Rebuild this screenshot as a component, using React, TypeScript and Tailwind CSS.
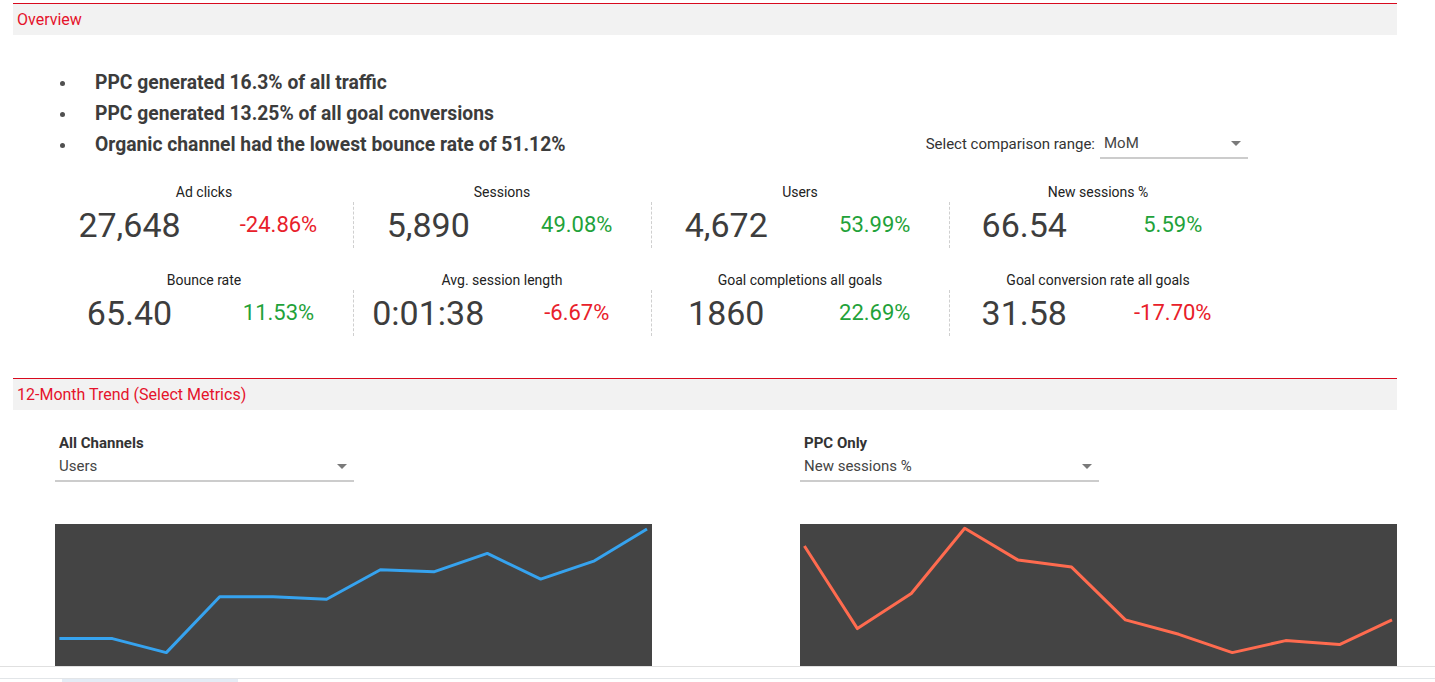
import React from 'react'

const font = { fontFamily: 'Roboto, "Liberation Sans", sans-serif' }

type Metric = { label: string; value: string; delta: string; up: boolean }

const metrics: Metric[][] = [
  [
    { label: 'Ad clicks', value: '27,648', delta: '-24.86%', up: false },
    { label: 'Sessions', value: '5,890', delta: '49.08%', up: true },
    { label: 'Users', value: '4,672', delta: '53.99%', up: true },
    { label: 'New sessions %', value: '66.54', delta: '5.59%', up: true },
  ],
  [
    { label: 'Bounce rate', value: '65.40', delta: '11.53%', up: true },
    { label: 'Avg. session length', value: '0:01:38', delta: '-6.67%', up: false },
    { label: 'Goal completions all goals', value: '1860', delta: '22.69%', up: true },
    { label: 'Goal conversion rate all goals', value: '31.58', delta: '-17.70%', up: false },
  ],
]

const bluePts = [
  [4.4, 114.6], [57.4, 114.6], [111.3, 128.6], [164.7, 72.8], [218.1, 72.8], [271.6, 75.2],
  [325.4, 45.8], [378.8, 47.8], [432.3, 29.4], [485.7, 55.1], [539.5, 36.8], [592, 5],
]
const orangePts = [
  [4.4, 22], [57.4, 104.6], [111.3, 69.5], [164.7, 4.3], [218.1, 36.1], [271.6, 43.1],
  [325.4, 95.9], [378.8, 110.3], [432.3, 128.6], [485.7, 116.6], [539.5, 120.6], [592, 95.9],
]

function SectionHeader({ title }: { title: string }) {
  return (
    <div className="h-[32px] border-t border-[#d80a1e] bg-[#f2f2f2] flex items-center px-[4px]">
      <span className="text-[16px] text-[#e5132b]">{title}</span>
    </div>
  )
}

function Caret() {
  return (
    <svg width="10" height="5" viewBox="0 0 10 5" className="shrink-0">
      <path d="M0 0 L10 0 L5 5 Z" fill="#7a7a7a" />
    </svg>
  )
}

function Dropdown({ value, width }: { value: string; width: string }) {
  return (
    <div className={`${width} h-[29px] flex items-center justify-between pl-[4px] pr-[7px] border-b-2 border-[#cccccc]`}>
      <span className="text-[15px] text-[#444]">{value}</span>
      <Caret />
    </div>
  )
}

function MetricCell({ m, first }: { m: Metric; first: boolean }) {
  return (
    <div className="flex flex-col">
      <div className="h-[20px] leading-[20px] text-center text-[14px] text-[#222]">{m.label}</div>
      <div
        className={`h-[46px] flex items-center ${first ? '' : 'border-l border-dashed border-[#cfcfcf]'}`}
      >
        <div className="w-1/2 text-center text-[34px] leading-[40px] text-[#3d3d3d]">{m.value}</div>
        <div
          className={`w-1/2 text-center text-[22px] leading-[28px] ${m.up ? 'text-[#1fa23a]' : 'text-[#e8202a]'}`}
        >
          {m.delta}
        </div>
      </div>
    </div>
  )
}

function Chart({ pts, color }: { pts: number[][]; color: string }) {
  return (
    <div className="w-[597px] h-[142px] bg-[#444444]">
      <svg width="597" height="142" viewBox="0 0 597 142">
        <polyline
          points={pts.map((p) => p.join(',')).join(' ')}
          fill="none"
          stroke={color}
          strokeWidth="3"
          strokeLinejoin="round"
        />
      </svg>
    </div>
  )
}

export default function App() {
  return (
    <div className="w-[1435px] h-[682px] overflow-hidden bg-white" style={font}>
      <div className="h-[666px] overflow-hidden pt-[3px]">
        <div className="ml-[13px] w-[1384px]">
          {/* ── Overview ── */}
          <SectionHeader title="Overview" />

          <div className="flex items-end mt-[33px]">
            <div className="pl-[47px] flex flex-col">
              {[
                'PPC generated 16.3% of all traffic',
                'PPC generated 13.25% of all goal conversions',
                'Organic channel had the lowest bounce rate of 51.12%',
              ].map((t) => (
                <div key={t} className="flex h-[31px] items-center">
                  <span className="w-[35px] flex items-center">
                    <span className="w-[5px] h-[5px] rounded-full bg-[#505050]" />
                  </span>
                  <span className="text-[19.3px] font-bold text-[#3c3c3c]">{t}</span>
                </div>
              ))}
            </div>
            <div className="ml-auto mr-[149px] mb-[2px] flex items-center gap-[5px]">
              <span className="text-[15px] text-[#333]">Select comparison range:</span>
              <Dropdown value="MoM" width="w-[148px]" />
            </div>
          </div>

          <div className="ml-[42px] w-[1192px] mt-[21px] flex flex-col gap-[22px]">
            {metrics.map((row, ri) => (
              <div key={ri} className="grid grid-cols-4">
                {row.map((m, i) => (
                  <MetricCell key={m.label} m={m} first={i === 0} />
                ))}
              </div>
            ))}
          </div>

          {/* ── 12-Month Trend ── */}
          <div className="mt-[42px]">
            <SectionHeader title="12-Month Trend (Select Metrics)" />
          </div>

          <div className="pl-[42px] mt-[23px] flex gap-[148px]">
            <div className="flex flex-col">
              <div className="pl-[4px] h-[20px] leading-[20px] text-[15px] font-bold text-[#333]">All Channels</div>
              <Dropdown value="Users" width="w-[299px]" />
              <div className="mt-[42px]">
                <Chart pts={bluePts} color="#36a3ef" />
              </div>
            </div>
            <div className="flex flex-col">
              <div className="pl-[4px] h-[20px] leading-[20px] text-[15px] font-bold text-[#333]">PPC Only</div>
              <Dropdown value="New sessions %" width="w-[299px]" />
              <div className="mt-[42px]">
                <Chart pts={orangePts} color="#ff6b4f" />
              </div>
            </div>
          </div>
        </div>
      </div>

      {/* page footer strip */}
      <div className="h-[12px] border-t border-[#e0e0e0] bg-white" />
      <div className="h-[4px] border-t border-[#e2e5e8] bg-white">
        <div className="ml-[62px] w-[176px] h-full bg-[#e4ecf5]" />
      </div>
    </div>
  )
}
